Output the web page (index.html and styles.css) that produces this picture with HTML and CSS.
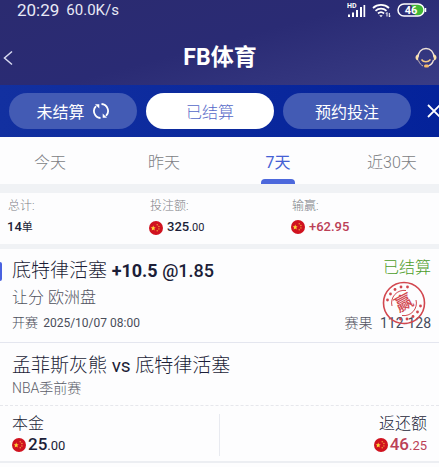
FILE: index.html
```html
<!DOCTYPE html>
<html lang="zh-CN">
<head>
  <meta charset="UTF-8" />
  <meta name="viewport" content="width=device-width, initial-scale=1.0"/>
  <title>FB体育</title>
  <link rel="stylesheet" href="styles.css">
</head>
<body>
  <!-- shared currency flag -->
  <svg class="defs" aria-hidden="true">
    <symbol id="flag" viewBox="0 0 14 14">
      <circle cx="7" cy="7" r="7" fill="#d0121f"/>
      <path fill="#ffd83a" d="M4.2 4.6l.7 1.7 1.8.1-1.4 1.2.5 1.8-1.6-1-1.5 1 .4-1.8L1.700 6.400l1.800-.1z"/>
      <g fill="#f4a53a"><circle cx="8.200" cy="3.800" r=".7"/><circle cx="9.900" cy="5.500" r=".7"/><circle cx="9.900" cy="7.900" r=".7"/><circle cx="8.200" cy="9.800" r=".7"/></g>
    </symbol>
  </svg>

  <header class="header">
    <div class="status">
      <span class="time">20:29</span>
      <span class="speed">60.0K/s</span>
      <svg class="signal" width="20" height="16" viewBox="0 0 20 16" fill="#fff">
        <text class="hd" x="0" y="6">HD</text>
        <path d="M1 12.500h2V15H1zM5 10.500h2V15H5zM9 8h2v7H9zM13 5h2v10h-2zM16.500 3h1.700v12h-1.700z"/>
      </svg>
      <svg class="wifi" width="20" height="16" viewBox="0 0 20 16" fill="none" stroke="#fff" stroke-width="1.800">
        <path d="M1 6a12 12 0 0 1 16 0M3.500 8.800a8.300 8.300 0 0 1 11 0M6 11.500a4.500 4.500 0 0 1 6 0"/>
        <path d="M7.300 13.200h3.400L9 15.200z" fill="#fff" stroke="none"/>
        <path d="M15 10.500v4M14 11.700l1-1.200M17.300 11v4M18.300 13.800l-1 1.200" stroke-width="1"/>
      </svg>
      <svg class="battery" width="30" height="14" viewBox="0 0 30 14">
        <path d="M14 1.500h8a5.500 5.500 0 0 1 0 11h-4z" fill="#42b936"/>
        <rect x="1" y="1" width="26" height="12" rx="6" fill="none" stroke="#fff" stroke-width="1.500"/>
        <path d="M28.500 5v4" stroke="#fff" stroke-width="1.500"/>
        <text class="level" x="14" y="11" text-anchor="middle">46</text>
      </svg>
    </div>
    <div class="nav">
      <button class="icon-btn" aria-label="返回">
        <svg width="10" height="16" viewBox="0 0 10 16" fill="none" stroke="#d8daf0" stroke-width="1.500"><path d="M9 1.500L1.500 8 9 14.500"/></svg>
      </button>
      <h1>FB体育</h1>
      <button class="icon-btn" aria-label="客服">
        <svg width="22" height="22" viewBox="0 0 22 22" fill="none">
          <path d="M3 10.500C3 5 6.500 1.500 11 1.500S19 5 19 10.500M18.500 13c-.8 3-2.800 5.200-5.500 6" stroke="#f0e3d8" stroke-width="1.300"/>
          <path d="M3.500 13.500c.8 2.500 2.500 4.500 4.500 5.500" stroke="#c9b8b8" stroke-width="1"/>
          <path d="M3.200 7.500v6C1.500 13.500.5 12 .5 10.500s1-3 2.700-3zM18.800 7.500v6c1.700 0 2.700-1.500 2.700-3s-1-3-2.700-3z" fill="#fbe0a8"/>
          <path d="M6.500 12.500c2 3 6.500 3 9 0" stroke="#f3c987" stroke-width="1.500"/>
          <rect x="9" y="17.500" width="5" height="3" rx="1.500" fill="#f5b968"/>
        </svg>
      </button>
    </div>
  </header>

  <div class="filters">
    <button class="pill">未结算
      <svg width="18" height="18" viewBox="0 0 18 18" fill="none" stroke="#fff" stroke-width="1.800">
        <path d="M8.500 16A7 7 0 0 1 4 4.100M9.500 2A7 7 0 0 1 14 13.900"/>
        <path d="M3 2.200h4.300v4.300zM15 15.800h-4.300v-4.300z" fill="#fff" stroke="none"/>
      </svg>
    </button>
    <button class="pill active">已结算</button>
    <button class="pill">预约投注</button>
    <button class="close" aria-label="关闭">
      <svg width="14" height="14" viewBox="0 0 14 14" stroke="#fff" stroke-width="1.800"><path d="M1 1l12 12M13 1L1 13"/></svg>
    </button>
  </div>

  <nav class="days">
    <button>今天</button>
    <button>昨天</button>
    <button class="active">7天</button>
    <button>近30天</button>
  </nav>

  <section class="summary">
    <div>
      <p class="label">总计:</p>
      <p class="value"><span>14<small>单</small></span></p>
    </div>
    <div>
      <p class="label">投注额:</p>
      <p class="value"><svg class="flag"><use href="#flag"/></svg><span>325<small>.00</small></span></p>
    </div>
    <div>
      <p class="label">输赢:</p>
      <p class="value win"><svg class="flag"><use href="#flag"/></svg><span>+62.95</span></p>
    </div>
  </section>

  <article class="bet">
    <div class="pick">
      <div class="row">
        <h2>底特律活塞 <span class="odds"><b>+10.5</b> @1.85</span></h2>
        <span class="settled">已结算</span>
      </div>
      <p class="market">让分 欧洲盘</p>
      <div class="row">
        <p class="start">开赛 <span>2025/10/07 08:00</span></p>
        <p class="result">赛果 <span>112-128</span></p>
      </div>
      <svg class="stamp" width="44" height="44" viewBox="0 0 44 44" fill="none" stroke="#d2474f">
        <circle cx="22" cy="22" r="20.500" stroke-width="1.600"/>
        <path d="M10 25a12.500 12.500 0 0 1 14-15.500M34 19a12.500 12.500 0 0 1-14 15.500" stroke-width="1"/>
        <g fill="#d2474f" stroke="none">
          <circle cx="5.500" cy="19" r="1.400"/><circle cx="8.500" cy="13" r="1.400"/><circle cx="13" cy="8.500" r="1.400"/><circle cx="19" cy="6" r="1.400"/><circle cx="25.500" cy="6" r="1.400"/>
          <circle cx="38.500" cy="25" r="1.400"/><circle cx="35.500" cy="31" r="1.400"/><circle cx="31" cy="35.500" r="1.400"/><circle cx="25" cy="38" r="1.400"/><circle cx="18.500" cy="38" r="1.400"/>
        </g>
        <text class="stamp-text" x="22" y="28" text-anchor="middle" transform="rotate(-28 22 22)">赢</text>
      </svg>
    </div>

    <div class="match">
      <h2>孟菲斯灰熊 <span class="vs">vs</span> 底特律活塞</h2>
      <p>NBA季前赛</p>
    </div>

    <div class="money">
      <div class="stake">
        <p>本金</p>
        <p class="amount"><svg class="flag"><use href="#flag"/></svg><span>25<small>.00</small></span></p>
      </div>
      <div class="payout">
        <p>返还额</p>
        <p class="amount win"><svg class="flag"><use href="#flag"/></svg><span>46<small>.25</small></span></p>
      </div>
    </div>
  </article>
</body>
</html>
```

FILE: styles.css
```css
* {
  box-sizing: border-box;
}

body {
  margin: 0;
  font-family: Roboto, "Noto Sans CJK SC", sans-serif;
  font-weight: 300;
  background: #fdfdfe;
  color: #1c1e38;
  overflow-x: hidden;
}

h1, h2, p {
  margin: 0;
}

h2 {
  font-size: 19px;
  line-height: 28px;
  font-weight: 300;
}

button {
  border: none;
  padding: 0;
  background: none;
  font: inherit;
  color: inherit;
  cursor: pointer;
}

svg {
  display: block;
  flex: none;
}

.defs {
  position: absolute;
  width: 0;
  height: 0;
}

.header {
  background: linear-gradient(165deg, #2b2b70 0%, #2a2b74 50%, #393c85 100%);
  color: #fff;
}

.status {
  display: flex;
  align-items: center;
  height: 20px;
  padding: 0 12px 0 17px;
  font-weight: 400;
  color: #e8e9f5;
}

.time {
  font-size: 17px;
}

.speed {
  font-size: 15px;
  margin-left: 7px;
}

.signal {
  margin-left: auto;
}

.hd {
  font-size: 7px;
  font-weight: 700;
}

.wifi {
  margin: 0 5px;
}

.level {
  font-size: 11px;
  font-weight: 700;
  fill: #fff;
}

.nav {
  display: flex;
  align-items: center;
  justify-content: space-between;
  height: 65px;
  padding: 10px 2px 0 3px;
}

.nav h1 {
  font-size: 23px;
  line-height: 32px;
  font-weight: 700;
}

.icon-btn {
  display: flex;
  width: 22px;
}

.filters {
  display: flex;
  align-items: center;
  gap: 9px;
  height: 52px;
  padding-left: 9px;
  background: linear-gradient(90deg, #1230a0, #04229a);
  overflow: hidden;
}

.pill {
  flex: 1;
  display: flex;
  align-items: center;
  justify-content: center;
  gap: 7px;
  height: 36px;
  border-radius: 18px;
  background: #435bb4;
  color: #fff;
  font-size: 16px;
  font-weight: 400;
}

.pill.active {
  background: #fff;
  color: #5468c8;
  font-weight: 300;
}

.close {
  width: 19px;
  padding-left: 7px;
}

/* the row runs a little past both sides */
.days {
  display: flex;
  height: 47px;
  margin: 0 -10px 0 -7px;
}

.days button {
  flex: 1;
  position: relative;
  font-size: 16px;
  color: #7c7e83;
}

.days .active {
  color: #4460d4;
  font-weight: 400;
}

.days .active::after {
  content: "";
  position: absolute;
  left: 50%;
  bottom: 0;
  width: 34px;
  height: 5px;
  margin-left: -17px;
  border-radius: 4px 4px 0 0;
  background: #4c68dc;
}

.summary {
  display: grid;
  grid-template-columns: repeat(3, 1fr);
  padding: 4px 6px 5px 7px;
  border-top: 9px solid #f0f2f5;
  border-bottom: 5px solid #f0f2f5;
}

.label {
  padding-left: 1px;
  font-size: 12px;
  line-height: 19px;
  color: #7c7d85;
}

.value {
  display: flex;
  align-items: center;
  gap: 4px;
  font-size: 13px;
  line-height: 22px;
  font-weight: 500;
}

.value small {
  font-size: 11px;
  font-weight: 400;
}

.flag {
  width: 14px;
  height: 14px;
}

.win {
  color: #bb4056;
}

.pick {
  position: relative;
  padding: 8px 8px 7px 12px;
  border-bottom: 1px solid #e4e6ef;
}

/* blue marker on the card edge */
.pick::before {
  content: "";
  position: absolute;
  left: 0;
  top: 13px;
  width: 2px;
  height: 19px;
  border-radius: 0 2px 2px 0;
  background: #4a62e0;
}

.row {
  display: flex;
  justify-content: space-between;
}

.odds {
  font-size: 18px;
  font-weight: 500;
}

.vs {
  font-weight: 400;
}

.settled {
  font-size: 16px;
  line-height: 22px;
  color: #4b9c28;
}

.market {
  font-size: 16px;
  line-height: 26px;
  color: #50525e;
}

.start {
  font-size: 13px;
  line-height: 24px;
  color: #4a4d5a;
}

.start span {
  margin-left: 2px;
  font-size: 12px;
  font-weight: 400;
}

.result {
  font-size: 14px;
  line-height: 24px;
  color: #50525e;
}

.result span {
  margin-left: 4px;
  font-weight: 400;
  color: #454b5c;
}

.stamp {
  position: absolute;
  right: 13px;
  top: 32px;
}

.stamp-text {
  font-size: 18px;
  font-weight: 500;
  fill: #d2474f;
  stroke: none;
}

.match {
  padding: 9px 12px;
  border-bottom: 1px dashed #e6e7ec;
}

.match p {
  font-size: 14px;
  line-height: 16px;
  color: #5c5e69;
}

.money {
  display: flex;
  padding: 8px 0 5px;
  border-bottom: 2px solid #eceef2;
}

.money > div {
  flex: 1;
  padding: 0 12px;
  font-size: 16px;
  line-height: 20px;
}

.money .payout {
  text-align: right;
  border-left: 1px solid #e8eaf0;
}

.amount {
  display: flex;
  align-items: center;
  gap: 2px;
  font-size: 17px;
  font-weight: 500;
}

.payout .amount {
  justify-content: flex-end;
}

.amount small {
  font-size: 13px;
  font-weight: 400;
}
```
